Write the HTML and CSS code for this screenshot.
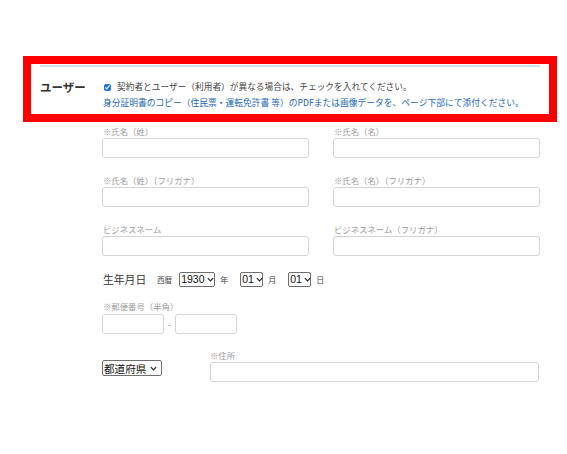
FILE: index.html
```html
<!DOCTYPE html>
<html lang="ja">
<head>
<meta charset="utf-8">
<title>ユーザー</title>
<link rel="stylesheet" href="styles.css">
</head>
<body>
<div class="page">
  <section class="user-section">
    <div class="head-row">
      <div class="section-label">ユーザー</div>
      <div class="head-body">
        <label class="check-line"><input type="checkbox" class="check" checked> 契約者とユーザー（利用者）が異なる場合は、チェックを入れてください。</label>
        <p class="note">身分証明書のコピー（住民票・運転免許書 等）のPDFまたは画像データを、ページ下部にて添付ください。</p>
      </div>
    </div>

    <div class="fields">
      <div class="grid">
        <div class="field"><div class="flabel">※氏名（姓）</div><div class="input"></div></div>
        <div class="field"><div class="flabel">※氏名（名）</div><div class="input"></div></div>
        <div class="field"><div class="flabel">※氏名（姓）（フリガナ）</div><div class="input"></div></div>
        <div class="field"><div class="flabel">※氏名（名）（フリガナ）</div><div class="input"></div></div>
        <div class="field"><div class="flabel">ビジネスネーム</div><div class="input"></div></div>
        <div class="field"><div class="flabel">ビジネスネーム（フリガナ）</div><div class="input"></div></div>
      </div>

      <div class="birth-row">
        <span class="birth-label">生年月日</span>
        <span class="era">西暦</span>
        <span class="select w-year">1930<svg class="chev" viewBox="0 0 8 5" width="7" height="5"><path d="M1 1l3 3 3-3" fill="none" stroke="#222" stroke-width="1.4"/></svg></span>
        <span class="unit">年</span>
        <span class="select w-md m-left">01<svg class="chev" viewBox="0 0 8 5" width="7" height="5"><path d="M1 1l3 3 3-3" fill="none" stroke="#222" stroke-width="1.4"/></svg></span>
        <span class="unit">月</span>
        <span class="select w-md m-left">01<svg class="chev" viewBox="0 0 8 5" width="7" height="5"><path d="M1 1l3 3 3-3" fill="none" stroke="#222" stroke-width="1.4"/></svg></span>
        <span class="unit">日</span>
      </div>

      <div class="postal">
        <div class="flabel">※郵便番号（半角）</div>
        <div class="postal-row">
          <div class="input short"></div>
          <span class="dash">-</span>
          <div class="input short"></div>
        </div>
      </div>

      <div class="address-row">
        <span class="select pref">都道府県<svg class="chev" viewBox="0 0 8 5" width="7" height="5"><path d="M1 1l3 3 3-3" fill="none" stroke="#222" stroke-width="1.4"/></svg></span>
        <div class="field address">
          <div class="flabel">※住所</div>
          <div class="input"></div>
        </div>
      </div>
    </div>
  </section>
  <div class="highlight"></div>
</div>
</body>
</html>
```

FILE: styles.css
```css
html, body {
  margin: 0;
  padding: 0;
  background: #fff;
}
body {
  font-family: "Noto Sans CJK JP", "Noto Sans", sans-serif;
  color: #333;
}
.page {
  position: relative;
  box-sizing: border-box;
  width: 567px;
  height: 454px;
  padding-top: 65px;
  overflow: hidden;
}
.user-section {
  margin: 0 0 0 40px;
  width: 500px;
  border-top: 2px solid #cde3f3;
}
.head-row {
  display: flex;
  padding-top: 12px;
}
.section-label {
  width: 63px;
  flex: none;
  font-size: 11.5px;
  font-weight: bold;
  line-height: 16px;
  color: #333;
}
.head-body {
  flex: 1;
}
.check-line {
  display: flex;
  align-items: center;
  font-size: 8.7px;
  line-height: 16px;
  color: #444;
  white-space: nowrap;
}
.check {
  width: 7px;
  height: 7px;
  margin: 0 6px 0 1px;
  accent-color: #1a73e8;
}
.note {
  margin: 1px 0 0 0;
  font-size: 8.75px;
  line-height: 14px;
  color: #2468b0;
  white-space: nowrap;
}
.fields {
  margin: 15px 0 0 62px;
  width: 438px;
}
.grid {
  display: grid;
  grid-template-columns: 207px 207px;
  column-gap: 24px;
  row-gap: 16px;
}
.flabel {
  font-size: 8.4px;
  line-height: 13px;
  color: #9c9c9c;
  padding-left: 1px;
  white-space: nowrap;
}
.input {
  box-sizing: border-box;
  height: 20px;
  border: 1px solid #d4d4d4;
  border-radius: 3px;
  background: #fff;
}
.birth-row {
  display: flex;
  align-items: center;
  height: 16px;
  margin-top: 15px;
  white-space: nowrap;
}
.birth-label {
  font-size: 10.8px;
  color: #333;
  padding-left: 1px;
  width: 54px;
}
.era {
  font-size: 7.6px;
  color: #444;
  margin-right: 7px;
}
.select {
  box-sizing: border-box;
  display: inline-flex;
  align-items: center;
  justify-content: space-between;
  height: 15px;
  padding: 0 2px 0 1px;
  border: 1px solid #6f6f6f;
  border-radius: 2px;
  font-family: "Liberation Sans", "Noto Sans CJK JP", sans-serif;
  font-size: 10.5px;
  color: #111;
  background: #fff;
  white-space: nowrap;
}
.chev {
  flex: none;
  margin-left: 2px;
}
.w-year { width: 36px; }
.w-md { width: 23px; }
.m-left { margin-left: 12px; }
.unit {
  font-size: 8px;
  color: #444;
  margin-left: 5px;
}
.postal {
  margin-top: 13px;
}
.postal-row {
  display: flex;
  align-items: center;
  margin-top: 1px;
}
.input.short {
  width: 62px;
}
.dash {
  width: 11px;
  text-align: center;
  font-size: 8px;
  color: #666;
}
.address-row {
  display: flex;
  align-items: flex-end;
  margin-top: 15px;
}
.select.pref {
  flex: none;
  width: 60px;
  height: 16px;
  margin-bottom: 6px;
  font-family: "Noto Sans CJK JP", sans-serif;
  font-size: 10.6px;
  padding: 0 4px 0 1px;
}
.address {
  margin-left: 48px;
  width: 329px;
}
.address .flabel {
  padding-left: 0;
}
.highlight {
  position: absolute;
  left: 23px;
  top: 56px;
  width: 534px;
  height: 66px;
  box-sizing: border-box;
  border: 8px solid #ff0000;
  pointer-events: none;
}
```
